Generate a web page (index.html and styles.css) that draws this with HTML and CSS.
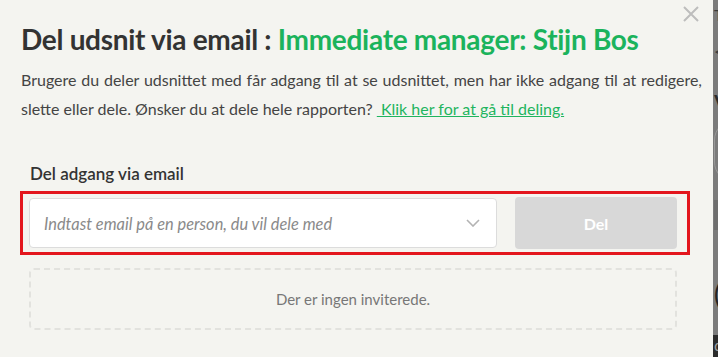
FILE: index.html
```html
<!DOCTYPE html>
<html lang="da">
<head>
    <meta charset="UTF-8">
    <meta name="viewport" content="width=device-width, initial-scale=1.0">
    <title>Del udsnit via email</title>
    <link rel="stylesheet" href="styles.css">
</head>
<body>
    <div class="screen">
        <div class="modal">
            <button class="close" aria-label="Luk">
                <svg width="16" height="16" viewBox="0 0 16 16">
                    <path d="M1 1 L15 15 M15 1 L1 15" stroke="#bdbdbd" stroke-width="2" fill="none"/>
                </svg>
            </button>
            <h1>Del udsnit via email : <span class="green">Immediate manager: Stijn Bos</span></h1>
            <p class="intro">
                Brugere du deler udsnittet med får adgang til at se udsnittet, men har ikke adgang til at redigere,
                slette eller dele. Ønsker du at dele hele rapporten? <a href="#">&nbsp;Klik her for at gå til deling.</a>
            </p>

            <div class="share">
                <label class="label">Del adgang via email</label>
                <div class="highlight">
                    <div class="email-select">
                        <span class="placeholder">Indtast email på en person, du vil dele med</span>
                        <svg class="chevron" width="14" height="8" viewBox="0 0 14 8">
                            <path d="M1 1 L7 7 L13 1" stroke="#b3b3b3" stroke-width="1.6" fill="none"/>
                        </svg>
                    </div>
                    <button class="share-button">Del</button>
                </div>
                <div class="invited">Der er ingen inviterede.</div>
            </div>
        </div>

        <!-- siden bag modalen -->
        <div class="backdrop">
            <span class="bg-t">T</span>
            <span class="bg-lt">&lt;</span>
            <span class="bg-v">V</span>
            <span class="bg-ring"></span>
            <span class="bg-band"></span>
            <span class="bg-paren">(</span>
            <div class="bg-footer">d</div>
        </div>
    </div>
</body>
</html>
```

FILE: styles.css
```css
body {
    margin: 0;
    font-family: 'Lato', 'Open Sans', sans-serif;
    background-color: #7b7b7b;
    overflow: hidden;
}

.screen {
    display: flex;
    height: 357px;
}

.modal {
    position: relative;
    width: 713px;
    flex-shrink: 0;
    background-color: #f4f4f0;
    padding: 22px 11px 0 21px;
    box-sizing: border-box;
}

.close {
    position: absolute;
    top: 6px;
    right: 14px;
    background: none;
    border: none;
    padding: 0;
    cursor: pointer;
}

h1 {
    margin: 0;
    font-size: 28px;
    line-height: 34px;
    font-weight: 700;
    color: #333333;
    letter-spacing: -0.3px;
}

.green {
    color: #1bb35c;
}

.intro {
    margin: 9px 0 0;
    font-size: 16px;
    line-height: 29px;
    color: #444444;
    text-align: justify;
}

.intro a {
    color: #1fb55f;
    text-decoration: underline;
}

.share {
    margin: 40px 0 0 -1px;
    width: 670px;
}

.label {
    display: block;
    padding-left: 10px;
    font-size: 17px;
    line-height: 22px;
    font-weight: 600;
    color: #333333;
}

.highlight {
    margin-top: 6px;
    display: flex;
    align-items: center;
    gap: 18px;
    height: 64px;
    padding: 0 10px 0 6px;
    border: 3px solid #e3161d;
    box-sizing: border-box;
}

.email-select {
    flex: 1;
    height: 50px;
    display: flex;
    align-items: center;
    justify-content: space-between;
    padding: 0 16px 0 14px;
    background-color: #ffffff;
    border: 1px solid #dcdcdc;
    border-radius: 4px;
    box-sizing: border-box;
}

.placeholder {
    font-size: 16.4px;
    font-style: italic;
    color: #8a8a8a;
}

.share-button {
    width: 162px;
    height: 52px;
    background-color: #d8d8d8;
    color: #ffffff;
    font-family: 'Lato', 'Open Sans', sans-serif;
    font-size: 16px;
    font-weight: 700;
    border: none;
    border-radius: 4px;
}

.invited {
    margin: 13px 0 0 9px;
    width: 648px;
    height: 62px;
    display: flex;
    align-items: center;
    justify-content: center;
    border: 2px dashed #e2e2de;
    border-radius: 5px;
    box-sizing: border-box;
    font-size: 15px;
    color: #777777;
}

.backdrop {
    position: relative;
    flex: 1;
    background-color: #7b7b7b;
    color: #3a3a3a;
    font-size: 20px;
    overflow: hidden;
}

.backdrop span {
    position: absolute;
    left: 1px;
}

.bg-t { top: 5px; font-size: 16px; }
.bg-lt { top: 40px; font-size: 18px; }
.bg-v { top: 88px; font-size: 28px; color: #2a2a2a; }
.bg-ring {
    top: 120px;
    width: 40px;
    height: 60px;
    border: 1px solid #999;
    border-radius: 20px;
}
.bg-band {
    top: 200px;
    width: 10px;
    height: 30px;
    background-color: #6e6e6e;
}
.bg-paren { top: 278px; font-size: 26px; color: #222; }

.bg-footer {
    position: absolute;
    left: 0;
    right: 0;
    top: 335px;
    bottom: 0;
    background-color: #2b2b2b;
    color: #9a9a9a;
    font-size: 16px;
    padding-left: 1px;
}
```
